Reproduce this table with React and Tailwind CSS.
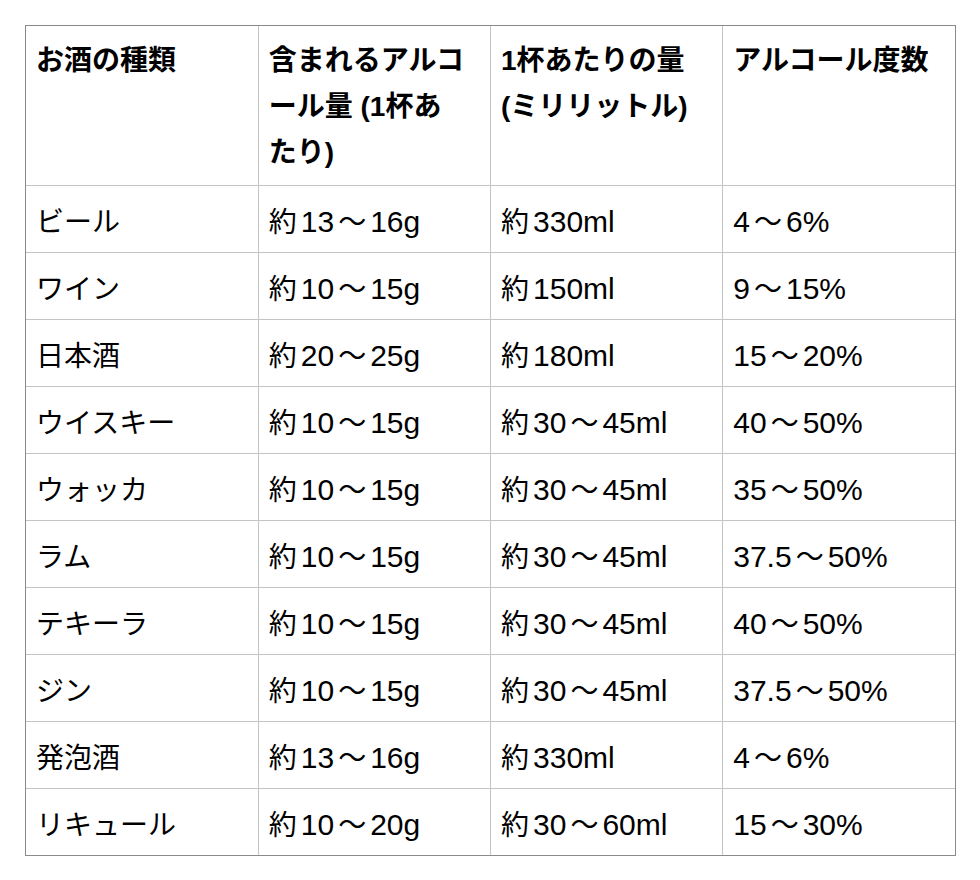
import React from "react";

const header = [
  ["お酒の種類"],
  ["含まれるアルコ", "ール量 (1杯あ", "たり)"],
  ["1杯あたりの量", "(ミリリットル)"],
  ["アルコール度数"],
];

const rows = [
  ["ビール", "約13～16g", "約330ml", "4～6%"],
  ["ワイン", "約10～15g", "約150ml", "9～15%"],
  ["日本酒", "約20～25g", "約180ml", "15～20%"],
  ["ウイスキー", "約10～15g", "約30～45ml", "40～50%"],
  ["ウォッカ", "約10～15g", "約30～45ml", "35～50%"],
  ["ラム", "約10～15g", "約30～45ml", "37.5～50%"],
  ["テキーラ", "約10～15g", "約30～45ml", "40～50%"],
  ["ジン", "約10～15g", "約30～45ml", "37.5～50%"],
  ["発泡酒", "約13～16g", "約330ml", "4～6%"],
  ["リキュール", "約10～20g", "約30～60ml", "15～30%"],
];

function Cell({ text }) {
  if (!/[～約]/.test(text)) return text;
  const parts = text.split(/([～約])/).filter((p) => p !== "");
  return parts.map((p, i) => {
    if (p === "～")
      return (
        <span key={i} className="mx-[4px]">
          ～
        </span>
      );
    if (p === "約")
      return (
        <span key={i} className="mr-[4px]">
          約
        </span>
      );
    return (
      <span key={i} className="text-[30px] leading-[30px]">
        {p}
      </span>
    );
  });
}

export default function App() {
  return (
    <div
      className="min-h-[880px] w-[980px] bg-white pl-[25px] pt-[25px] text-black"
      style={{ fontFamily: '"Liberation Sans", "Noto Sans CJK JP", sans-serif' }}
    >
      <div className="w-[931px] border border-[#8a8a8a]">
        <table className="w-full table-fixed border-collapse text-[28px] leading-[46px]">
          <thead>
            <tr>
              {header.map((lines, i) => (
                <th
                  key={i}
                  className="border-l border-[#c4c4c4] px-[10px] pt-[12px] pb-[9px] text-left align-top font-bold first:border-l-0"
                >
                  {lines.map((l, li) => (
                    <span key={li} className="block whitespace-nowrap">
                      {l}
                    </span>
                  ))}
                </th>
              ))}
            </tr>
          </thead>
          <tbody>
            {rows.map((r, ri) => (
              <tr key={ri}>
                {r.map((c, ci) => (
                  <td
                    key={ci}
                    className="whitespace-nowrap border-l border-t border-[#c4c4c4] px-[10px] pt-[14px] pb-[6px] align-top font-normal first:border-l-0"
                  >
                    <Cell text={c} />
                  </td>
                ))}
              </tr>
            ))}
          </tbody>
        </table>
      </div>
    </div>
  );
}
